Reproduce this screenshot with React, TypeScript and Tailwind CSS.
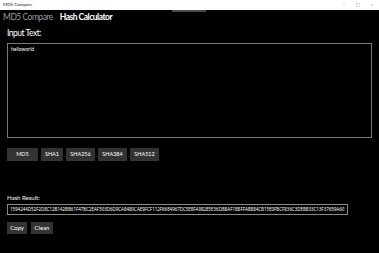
import { Minus, Square, X } from "lucide-react";

const hash =
  "1594244D52F2D8C12B142BB61F47BC2EAF503D6D9CA8480CAE9FCF112F66E4967DC5E8FA98285E36DB8AF1B8FFA8B84CB15E0FBCF836C3DEB803C13F37659A60";

const algos = [
  { label: "MD5", w: "w-[31px]" },
  { label: "SHA1", w: "w-[22px]" },
  { label: "SHA256", w: "w-[29px]" },
  { label: "SHA384", w: "w-[29px]" },
  { label: "SHA512", w: "w-[29px]" },
];

export default function App() {
  return (
    <div className="flex h-[253px] w-[379px] flex-col overflow-hidden bg-black font-['Lato',sans-serif] text-white">
      {/* window title bar */}
      <div className="flex h-[10px] shrink-0 items-center justify-between bg-white pl-[3px] pr-[5px] text-[#222]">
        <span className="text-[4.5px] leading-none">MD5 Compare</span>
        <div className="flex items-center gap-[10px] text-[#777]">
          <Minus size={4} strokeWidth={1.5} />
          <Square size={4} strokeWidth={1.5} />
          <X size={4} strokeWidth={1.5} />
        </div>
      </div>

      <div className="relative flex flex-1 flex-col">
        <div className="absolute left-[172px] top-0 h-[2px] w-[34px] bg-[#4a4a4a]" />

        {/* tabs */}
        <div className="mt-[1px] flex h-[12px] items-center gap-[7px] px-[3px] text-[8.5px] leading-none">
          <span className="tracking-[-0.5px] text-[#9a9a9a]">MD5 Compare</span>
          <span className="font-bold tracking-[-0.5px]">Hash Calculator</span>
        </div>

        <div className="mt-[4px] flex h-[12px] items-center px-[7px] text-[8.5px] leading-none tracking-[-0.5px]">
          Input Text:
        </div>

        <div className="mx-[7px] mt-[4px] h-[95px] border border-[#7a7a7a] px-[3px] pt-[3px] text-[5px] leading-none">
          helloworld
        </div>

        <div className="mt-[10px] flex gap-[3px] px-[7px]">
          {algos.map((a) => (
            <div
              key={a.label}
              className={`flex h-[13px] items-center justify-center bg-[#333] text-[5.5px] leading-none ${a.w}`}
            >
              {a.label}
            </div>
          ))}
        </div>

        <div className="mt-[34px] px-[7px] text-[6px] leading-none">Hash Result:</div>

        <div className="mx-[7px] mt-[3px] flex h-[11px] w-[341px] items-center overflow-hidden whitespace-nowrap border border-[#8a8a8a] px-[2px] font-['Noto_Sans',sans-serif] text-[4.45px] leading-none">
          {hash}
        </div>

        <div className="mt-[7px] flex gap-[4px] px-[7px]">
          <div className="flex h-[12px] w-[20px] items-center justify-center bg-[#333] text-[6px] leading-none">
            Copy
          </div>
          <div className="flex h-[12px] w-[22px] items-center justify-center bg-[#333] text-[6px] leading-none">
            Clean
          </div>
        </div>
      </div>
    </div>
  );
}
